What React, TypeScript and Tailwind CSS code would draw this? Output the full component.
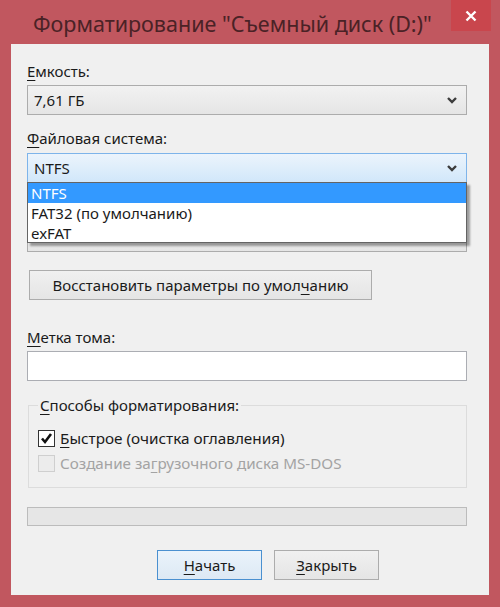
import React from "react";

const U = ({ children }: { children: React.ReactNode }) => (
  <span className="underline decoration-1 underline-offset-[3px]">{children}</span>
);

const Chevron = () => (
  <svg width="12" height="10" viewBox="0 0 12 10" className="absolute right-[8px] top-1/2 -translate-y-1/2">
    <path d="M2 3 L6 7 L10 3" fill="none" stroke="#3c3c3c" strokeWidth="2.4" />
  </svg>
);

export default function App() {
  return (
    <div
      className="w-[500px] h-[607px] bg-[#c1575f] flex flex-col"
      style={{ fontFamily: '"Noto Sans", "Open Sans", "DejaVu Sans", sans-serif' }}
    >
      {/* Title bar */}
      <div className="h-[44px] relative flex items-center shrink-0">
        <div className="pl-[33px] text-[21.5px] text-[#4a2226] leading-none pt-[3px]">
          Форматирование "Съемный диск (D:)"
        </div>
        <div className="absolute right-[9px] top-0 w-[40px] h-[31px] bg-[#c9464d] flex items-center justify-center">
          <svg width="12" height="12" viewBox="0 0 12 12">
            <path d="M1.5 1.5 L10.5 10.5 M10.5 1.5 L1.5 10.5" stroke="#ffffff" strokeWidth="2.4" />
          </svg>
        </div>
      </div>

      {/* Content */}
      <div className="ml-[11px] w-[478px] h-[551px] bg-[#f0f0f0] pl-[16px] pr-[22px] text-[15px] text-[#1a1a1a] leading-none">
        <div className="h-[41px] flex items-end pb-[6px]">
          <span><U>Е</U>мкость:</span>
        </div>
        <div className="relative h-[30px] border border-[#acacac] bg-gradient-to-b from-[#f2f2f2] to-[#e5e5e5] flex items-center pl-[6px]">
          7,61 ГБ
          <Chevron />
        </div>
        <div className="h-[38px] flex items-end pb-[7px]">
          <span><U>Ф</U>айловая система:</span>
        </div>
        <div className="relative">
          <div className="relative h-[30px] border border-[#7eb4ea] bg-gradient-to-b from-[#ecf4fc] to-[#d1e7fa] flex items-center pl-[6px]">
            NTFS
            <Chevron />
          </div>
          <div className="absolute left-0 top-[29px] w-[440px] h-[61px] bg-white border border-[#646464] z-10 shadow-[3px_3px_2px_rgba(0,0,0,0.35)]">
            <div className="h-[20px] bg-[#3399ff] text-white flex items-center pl-[3px]">NTFS</div>
            <div className="h-[20px] flex items-center pl-[3px]">FAT32 (по умолчанию)</div>
            <div className="h-[20px] flex items-center pl-[3px]">exFAT</div>
          </div>
        </div>
        <div className="h-[39px]" />
        <div className="h-[30px] border border-[#acacac] bg-gradient-to-b from-[#f2f2f2] to-[#e5e5e5]" />
        <div className="h-[18px]" />
        <div className="w-[343px] h-[30px] ml-[2px] border border-[#acacac] bg-gradient-to-b from-[#f0f0f0] to-[#e5e5e5] flex items-center justify-center">
          <span>Восстановить параметры по умол<U>ч</U>анию</span>
        </div>
        <div className="h-[51px] flex items-end pb-[6px]">
          <span><U>М</U>етка тома:</span>
        </div>
        <div className="h-[30px] bg-white border border-[#abadb3]" />
        <div className="h-[16px]" />
        <div className="relative ml-[1px] h-[91px]">
          <div className="absolute inset-x-0 top-[8px] bottom-0 border border-[#dcdcdc]" />
          <div className="absolute left-[10px] top-0 bg-[#f0f0f0] px-[2px] h-[16px] flex items-center">
            <span><U>С</U>пособы форматирования:</span>
          </div>
          <div className="absolute left-[10px] top-[33px] flex items-center gap-[5px]">
            <div className="w-[17px] h-[17px] bg-white border border-[#333] flex items-center justify-center">
              <svg width="13" height="13" viewBox="0 0 13 13">
                <path d="M2 6.5 L5 10 L11 2" fill="none" stroke="#111" strokeWidth="2.6" />
              </svg>
            </div>
            <span className="text-[15.3px]"><U>Б</U>ыстрое (очистка оглавления)</span>
          </div>
          <div className="absolute left-[10px] top-[58px] flex items-center gap-[5px] text-[#a3a3a3]">
            <div className="w-[17px] h-[17px] bg-[#ececec] border border-[#cfcfcf]" />
            <span className="text-[15.2px]">Создание за<U>г</U>рузочного диска MS-DOS</span>
          </div>
        </div>
        <div className="h-[19px]" />
        <div className="h-[19px] border border-[#bcbcbc] bg-[#e6e6e6]" />
        <div className="h-[24px]" />
        <div className="flex gap-[12px] ml-[130px]">
          <div className="w-[105px] h-[30px] border border-[#4a90d0] bg-gradient-to-b from-[#eaf3fb] to-[#dde9f4] flex items-center justify-center">
            <span><U>Н</U>ачать</span>
          </div>
          <div className="w-[105px] h-[30px] border border-[#acacac] bg-gradient-to-b from-[#f0f0f0] to-[#e5e5e5] flex items-center justify-center">
            <span><U>З</U>акрыть</span>
          </div>
        </div>
      </div>
    </div>
  );
}
